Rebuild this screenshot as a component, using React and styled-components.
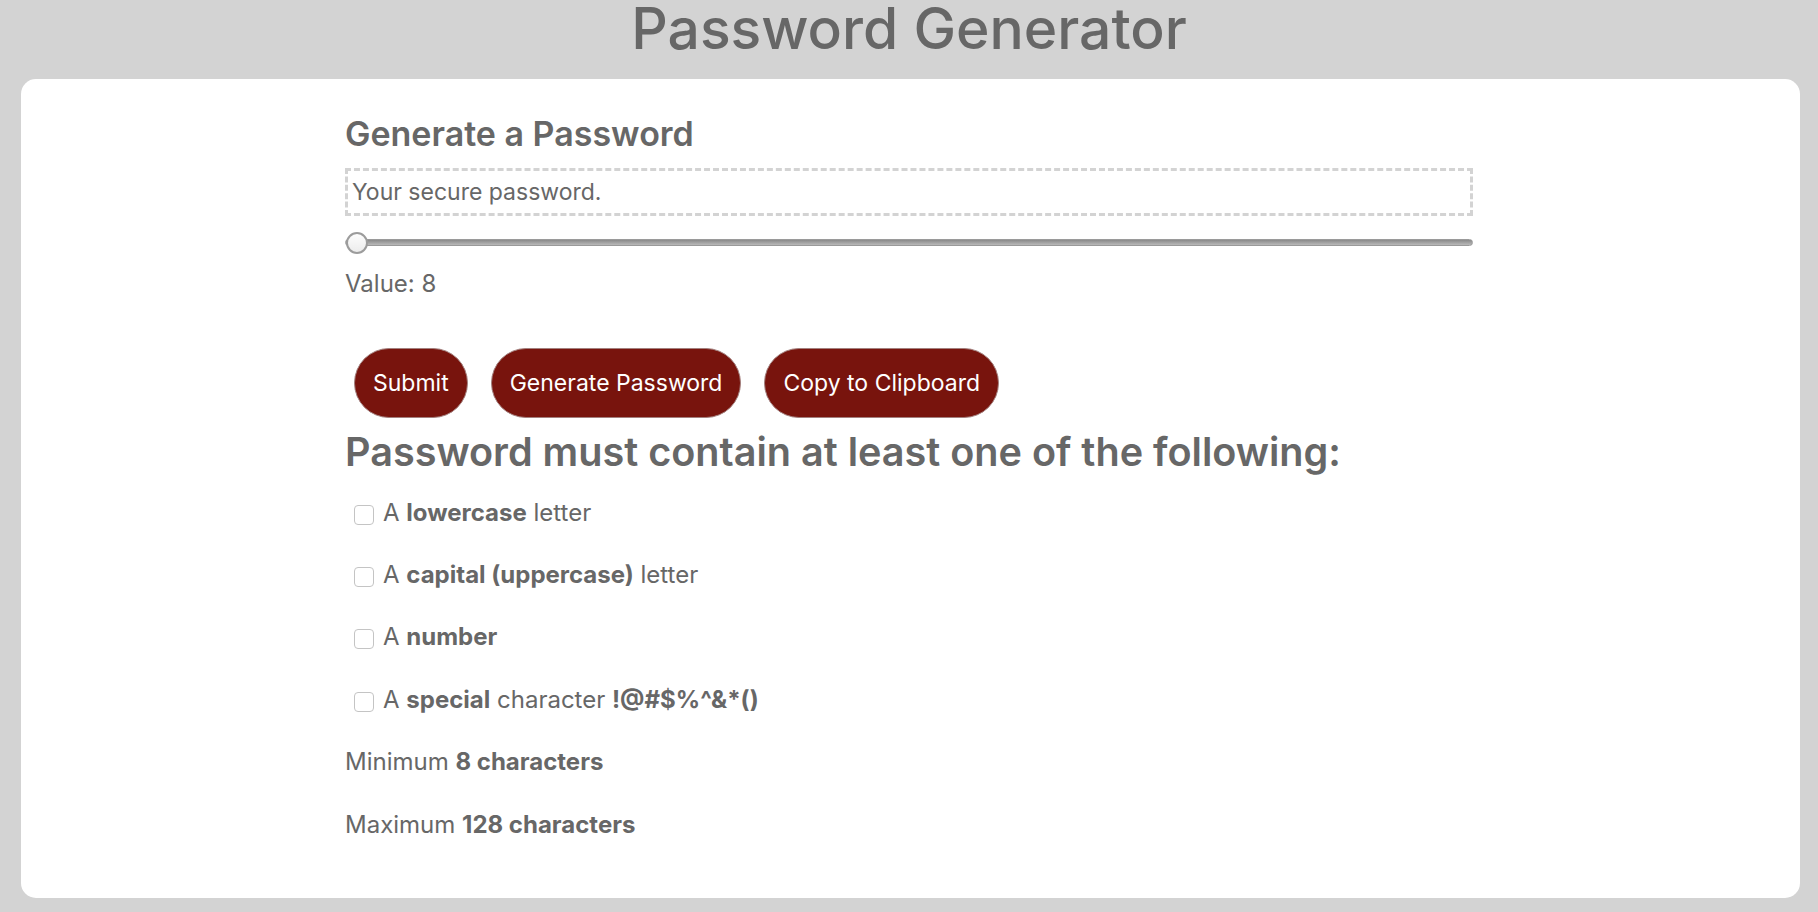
import React, { useState } from 'react';
import styled, { createGlobalStyle } from 'styled-components';

const GlobalStyle = createGlobalStyle`
  html, body {
    margin: 0;
    background: #d3d3d3;
  }

  body {
    font-family: Inter, "Noto Sans", "Liberation Sans", sans-serif;
    color: #676767;
  }
`;

const Title = styled.h1`
  margin: 0 0 22px;
  font-size: 57px;
  font-weight: 500;
  line-height: 1;
  text-align: center;
  color: #676767;
`;

const Card = styled.main`
  height: 819px;
  margin: 0 18px 0 21px;
  padding: 38px 3px 0 0;
  box-sizing: border-box;
  background: #fff;
  border-radius: 15px;
`;

const Content = styled.div`
  max-width: 1128px;
  margin: 0 auto;
`;

const Heading = styled.h2`
  margin: 0;
  font-size: ${(p) => p.size}px;
  font-weight: 600;
  line-height: 1;
  color: #676767;
`;

const Output = styled.div`
  margin-top: 17px;
  height: 42px;
  padding: 0 4px;
  border: 3px dashed #d3d3d3;
  font-size: 23px;
  line-height: 42px;
  color: #676767;
`;

const Slider = styled.input`
  display: block;
  width: 100%;
  height: 22px;
  margin: 15px 0 0;
  background: transparent;
  -webkit-appearance: none;
  appearance: none;

  &::-webkit-slider-runnable-track {
    height: 7px;
    border-radius: 4px;
    background: linear-gradient(#8a8a8a, #b9b9b9);
    border: 1px solid #9a9a9a;
    box-sizing: border-box;
  }

  &::-webkit-slider-thumb {
    -webkit-appearance: none;
    width: 22px;
    height: 22px;
    margin-top: -8px;
    border-radius: 50%;
    border: 2px solid #9c9c9c;
    box-sizing: border-box;
    background: linear-gradient(#fdfdfd, #ececec);
  }
`;

const Text = styled.p`
  margin: ${(p) => p.margin || '0'};
  font-size: 24px;
  line-height: 28px;
`;

const Buttons = styled.div`
  display: flex;
  gap: 23px;
  margin: 50px 0 15px;
  padding-left: 9px;
`;

const Button = styled.button`
  height: 70px;
  padding: 0 18px;
  border: 1.5px solid #a3807e;
  border-radius: 35px;
  background: #78140d;
  color: #fff;
  font-family: inherit;
  font-size: 23px;
  cursor: pointer;
`;

const List = styled.div`
  display: grid;
  row-gap: 34.4px;
  margin-top: 26px;
`;

const Option = styled.label`
  display: flex;
  align-items: center;
  gap: 9px;
  padding-left: 9px;
  font-size: 24px;
  line-height: 28px;
`;

const Check = styled.input`
  width: 20px;
  height: 20px;
  margin: 4px 0 0;
  border: 1px solid #c4c4c4;
  border-radius: 4px;
  background: #fff;
  -webkit-appearance: none;
  appearance: none;
`;

export default function App() {
  const [length, setLength] = useState(8);

  return (
    <>
      <GlobalStyle />
      <Title>Password Generator</Title>
      <Card>
        <Content>
          <Heading size={34}>Generate a Password</Heading>
          <Output>Your secure password.</Output>
          <Slider
            type="range"
            min="8"
            max="128"
            value={length}
            onChange={(e) => setLength(e.target.value)}
          />
          <Text margin="17px 0 0">Value: {length}</Text>
          <Buttons>
            <Button>Submit</Button>
            <Button>Generate Password</Button>
            <Button>Copy to Clipboard</Button>
          </Buttons>
          <Heading size={39.6}>Password must contain at least one of the following:</Heading>
          <List>
            <Option><Check type="checkbox" /><span>A <b>lowercase</b> letter</span></Option>
            <Option><Check type="checkbox" /><span>A <b>capital (uppercase)</b> letter</span></Option>
            <Option><Check type="checkbox" /><span>A <b>number</b></span></Option>
            <Option><Check type="checkbox" /><span>A <b>special</b> character <b>!@#$%^&amp;*()</b></span></Option>
            <Text>Minimum <b>8 characters</b></Text>
            <Text>Maximum <b>128 characters</b></Text>
          </List>
        </Content>
      </Card>
    </>
  );
}
